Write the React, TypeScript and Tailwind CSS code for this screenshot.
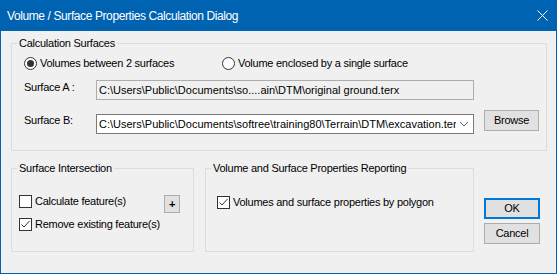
import { FC, ReactNode } from "react";

const font = { fontFamily: '"Liberation Sans", Arial, sans-serif' };

const Radio: FC<{ checked?: boolean; label: string }> = ({ checked, label }) => (
  <label className="flex items-center h-[13px] whitespace-nowrap">
    <span className="w-[13px] h-[13px] rounded-full border border-[#333333] bg-white flex items-center justify-center shrink-0">
      {checked && <span className="w-[7px] h-[7px] rounded-full bg-[#333333]" />}
    </span>
    <span className="ml-[3px] leading-none">{label}</span>
  </label>
);

const Checkbox: FC<{ checked?: boolean; label: string }> = ({ checked, label }) => (
  <label className="flex items-center h-[13px] whitespace-nowrap">
    <span className="w-[13px] h-[13px] border border-[#333333] bg-white flex items-center justify-center shrink-0">
      {checked && (
        <svg width="11" height="11" viewBox="0 0 11 11">
          <path d="M1.5 5.5 L4 8 L9.5 2" fill="none" stroke="#333333" strokeWidth="1" />
        </svg>
      )}
    </span>
    <span className="ml-[3px] leading-none">{label}</span>
  </label>
);

const Group: FC<{ title: string; className?: string; children: ReactNode }> = ({
  title,
  className,
  children,
}) => (
  <fieldset className={`border border-[#dcdcdc] p-0 m-0 ${className ?? ""}`}>
    <legend className="ml-[5px] px-[2px] leading-[16px]">{title}</legend>
    {children}
  </fieldset>
);

const Button: FC<{ children: ReactNode; primary?: boolean; className?: string }> = ({
  children,
  primary,
  className,
}) => (
  <button
    className={`bg-[#e1e1e1] flex items-center justify-center leading-none ${
      primary ? "border-2 border-[#0078d7]" : "border border-[#adadad]"
    } ${className ?? ""}`}
  >
    {children}
  </button>
);

const App: FC = () => {
  return (
    <div
      className="w-[557px] h-[274px] flex flex-col bg-[#f0f0f0] border-x border-b border-[#0063b1] text-[11px] tracking-[-0.25px] text-black overflow-hidden"
      style={font}
    >
      <div className="h-[31px] shrink-0 bg-[#0063b1] text-white flex items-center justify-between pl-[7px] pr-[9px] -mx-px">
        <span className="text-[12px] tracking-[-0.4px]">Volume / Surface Properties Calculation Dialog</span>
        <svg width="11" height="11" viewBox="0 0 11 11">
          <path d="M0.5 0.5 L10.5 10.5 M10.5 0.5 L0.5 10.5" stroke="white" strokeWidth="1" />
        </svg>
      </div>

      <div className="flex flex-col pl-[10px] pr-[9px] pt-[4px]">
        <Group title="Calculation Surfaces" className="w-[536px] pb-[16px]">
          <div className="flex pl-[12px] mt-[6px]">
            <div className="w-[198px]">
              <Radio checked label="Volumes between 2 surfaces" />
            </div>
            <Radio label="Volume enclosed by a single surface" />
          </div>
          <div className="flex items-start pl-[12px] mt-[10px]">
            <span className="w-[72px] -mt-px leading-[16px]">Surface A :</span>
            <div className="w-[378px] h-[20px] border border-[#adadad] bg-[#f0f0f0] flex items-center pl-[2px] whitespace-nowrap overflow-hidden tracking-normal">
              C:\Users\Public\Documents\so....ain\DTM\original ground.terx
            </div>
          </div>
          <div className="flex items-start pl-[12px] mt-[10px]">
            <span className="w-[72px] mt-[2px] leading-[16px]">Surface B:</span>
            <div className="w-[378px] h-[20px] mt-[4px] border border-[#7a7a7a] bg-white flex items-center pl-[2px] overflow-hidden tracking-normal">
              <span className="flex-1 whitespace-nowrap overflow-hidden">
                C:\Users\Public\Documents\softree\training80\Terrain\DTM\excavation.terx
              </span>
              <svg width="17" height="8" viewBox="0 0 17 8" className="shrink-0">
                <path d="M4 2 L8 6 L12 2" fill="none" stroke="#606060" strokeWidth="1" />
              </svg>
            </div>
            <Button className="w-[55px] h-[21px] ml-[10px]">Browse</Button>
          </div>
        </Group>

        <div className="flex mt-[9px]">
          <Group title="Surface Intersection" className="w-[183px] h-[92px]">
            <div className="flex items-start pl-[7px] mt-[19px]">
              <div className="w-[145px]">
                <Checkbox label="Calculate feature(s)" />
              </div>
              <Button className="w-[16px] h-[18px] text-[11px] font-bold">+</Button>
            </div>
            <div className="pl-[7px] mt-[5px]">
              <Checkbox checked label="Remove existing feature(s)" />
            </div>
          </Group>
          <Group title="Volume and Surface Properties Reporting" className="w-[269px] h-[92px] ml-[11px]">
            <div className="pl-[11px] mt-[20px]">
              <Checkbox checked label="Volumes and surface properties by polygon" />
            </div>
          </Group>
          <div className="flex flex-col ml-[10px] mt-[38px]">
            <Button primary className="w-[56px] h-[21px]">OK</Button>
            <Button className="w-[56px] h-[21px] mt-[4px]">Cancel</Button>
          </div>
        </div>
      </div>
    </div>
  );
};

export default App;
